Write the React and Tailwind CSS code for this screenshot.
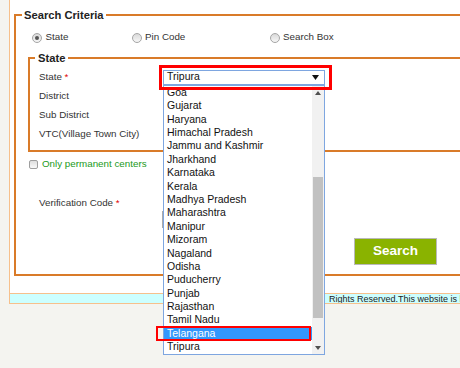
export default function App() {
  const states = [
    "Goa",
    "Gujarat",
    "Haryana",
    "Himachal Pradesh",
    "Jammu and Kashmir",
    "Jharkhand",
    "Karnataka",
    "Kerala",
    "Madhya Pradesh",
    "Maharashtra",
    "Manipur",
    "Mizoram",
    "Nagaland",
    "Odisha",
    "Puducherry",
    "Punjab",
    "Rajasthan",
    "Tamil Nadu",
    "Telangana",
    "Tripura",
  ];

  const Radio = ({ checked }) => (
    <span className="relative flex h-[10px] w-[10px] shrink-0 items-center justify-center rounded-full border border-[#a5a5a5] bg-linear-to-b from-[#d9d9d9] to-[#f7f7f7]">
      {checked && <span className="h-[4px] w-[4px] rounded-full bg-[#555]" />}
    </span>
  );

  return (
    <div className="relative h-[368px] w-[460px] overflow-hidden bg-[#f4f4f0] font-['Liberation_Sans',Arial,sans-serif] text-[#333]">
      <div className="ml-[9px] w-[451px] overflow-hidden border-l border-[#f6c08c] bg-white pt-[8px]">
        <fieldset className="ml-[4px] w-[470px] border-2 border-r-0 border-[#d97b29] pb-[9px] pl-[6px]">
          <legend className="px-[2px] text-[11.2px] font-bold leading-[14px] text-[#222]">
            Search Criteria
          </legend>

          <div className="mt-[8.5px] flex h-[14px] items-center text-[9.8px]">
            <div className="box-content flex w-[100px] items-center gap-[3.5px] pl-[10px]">
              <Radio checked />
              <span>State</span>
            </div>
            <div className="flex w-[138px] items-center gap-[3px]">
              <Radio />
              <span>Pin Code</span>
            </div>
            <div className="flex items-center gap-[3px]">
              <Radio />
              <span>Search Box</span>
            </div>
          </div>

          <fieldset className="ml-[6px] mt-[6.5px] w-[460px] border-2 border-r-0 border-[#d97b29] pb-[6.5px] pl-[5px] pt-[2.5px]">
            <legend className="px-[3px] text-[11.2px] font-bold leading-[14px] text-[#222]">
              State
            </legend>
            <div className="flex h-[19px] items-center pl-[4px] text-[9.8px]">
              <span className="w-[124px]">
                State <span className="text-[#e00000]">*</span>
              </span>
              <div className="flex h-[15px] w-[162px] items-center justify-between border border-[#7ea6e0] pl-[3px] pr-[5px] text-[10.5px] text-[#111]">
                <span>Tripura</span>
                <svg width="7" height="5" viewBox="0 0 7 5">
                  <path d="M0 0H7L3.5 5Z" fill="#111" />
                </svg>
              </div>
            </div>
            <div className="flex h-[19px] items-center pl-[4px] text-[9.8px]">District</div>
            <div className="flex h-[19px] items-center pl-[4px] text-[9.8px]">Sub District</div>
            <div className="flex h-[19px] items-center pl-[4px] text-[9.8px]">VTC(Village Town City)</div>
          </fieldset>

          <div className="ml-[7px] mt-[5.5px] flex h-[14px] items-center gap-[4px] text-[9.8px]">
            <span className="h-[9px] w-[9px] rounded-[2px] border border-[#9e9e9e] bg-linear-to-b from-[#dedede] to-[#f8f8f8]" />
            <span className="text-[#229a22]">Only permanent centers</span>
          </div>

          <div className="ml-[17px] mt-[24.5px] flex items-start text-[9.8px]">
            <span className="flex h-[14px] w-[123px] items-center">
              Verification Code&nbsp;<span className="text-[#e00000]">*</span>
            </span>
            <div className="mt-[15px] h-[17px] w-[150px] border border-[#aaaaaa] bg-white" />
          </div>

          <div className="ml-[332px] mt-[10px] flex h-[27px] w-[83px] items-center justify-center border border-[#b9b9b9] bg-[#8ab300] text-[13.5px] font-bold text-white">
            Search
          </div>
        </fieldset>

        <div className="h-[17px]" />
        <div className="flex h-[11px] items-center overflow-hidden whitespace-nowrap border-y border-[#f6c08c] bg-[#ccffff] pl-[319px] text-[9px] leading-[10px] text-[#222]">
          Rights Reserved.This website is b
        </div>
      </div>

      {/* Open dropdown list */}
      <div className="absolute left-[163px] top-[85px] flex h-[270px] w-[162px] border border-[#7ea6e0] bg-white">
        <div className="flex-1 overflow-hidden text-[10.5px] text-[#111]">
          {states.map((s) => (
            <div
              key={s}
              className={
                s === "Telangana"
                  ? "flex h-[13.4px] items-center whitespace-nowrap bg-[#3297fd] pl-[3px] text-white"
                  : "flex h-[13.4px] items-center whitespace-nowrap pl-[3px]"
              }
            >
              {s}
            </div>
          ))}
        </div>
        <div className="flex w-[12px] flex-col bg-[#f1f1f1]">
          <div className="flex h-[13px] items-center justify-center">
            <svg width="6" height="4" viewBox="0 0 6 4">
              <path d="M0 4H6L3 0Z" fill="#505050" />
            </svg>
          </div>
          <div className="flex-1">
            <div className="mx-[1px] mt-[78px] h-[141px] bg-[#c1c1c1]" />
          </div>
          <div className="flex h-[13px] items-center justify-center">
            <svg width="6" height="4" viewBox="0 0 6 4">
              <path d="M0 0H6L3 4Z" fill="#505050" />
            </svg>
          </div>
        </div>
      </div>

      {/* Red annotation boxes */}
      <div className="absolute left-[159px] top-[65px] h-[25px] w-[173px] border-[3px] border-[#ff0000]" />
      <div className="absolute left-[156px] top-[326px] h-[15px] w-[155px] border-[2.5px] border-[#ff0000]" />
    </div>
  );
}
